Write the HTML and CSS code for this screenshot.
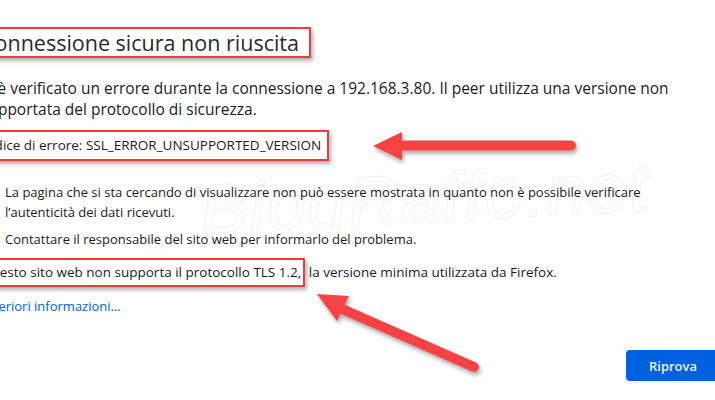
FILE: index.html
```html
<!DOCTYPE html>
<html lang="it">
<head>
<meta charset="utf-8">
<title>Connessione sicura non riuscita</title>
<link rel="stylesheet" href="styles.css">
</head>
<body>
<main class="page">
  <h1 class="title"><span class="mark mark-title">Connessione sicura non riuscita</span></h1>
  <p class="desc">Si è verificato un errore durante la connessione a 192.168.3.80. Il peer utilizza una versione non supportata del protocollo di sicurezza.</p>
  <p class="code"><span class="mark mark-code">Codice di errore: SSL_ERROR_UNSUPPORTED_VERSION</span></p>
  <ul class="list">
    <li>La pagina che si sta cercando di visualizzare non può essere mostrata in quanto non è possibile verificare l’autenticità dei dati ricevuti.</li>
    <li>Contattare il responsabile del sito web per informarlo del problema.</li>
  </ul>
  <p class="tls"><span class="mark mark-tls">Questo sito web non supporta il protocollo TLS 1.2,</span> la versione minima utilizzata da Firefox.</p>
  <p class="more"><a class="link" href="#">Ulteriori informazioni…</a></p>
  <div class="actions"><button class="btn">Riprova</button></div>
</main>
<div class="watermark">BlogRaffo.net</div>
<svg class="arrows" width="715" height="400" viewBox="0 0 715 400">
  <defs>
    <filter id="sh" x="-20%" y="-50%" width="140%" height="200%">
      <feDropShadow dx="1.5" dy="3" stdDeviation="2" flood-color="#000" flood-opacity="0.35"/>
    </filter>
  </defs>
  <g filter="url(#sh)" fill="#f54343" stroke="#f54343">
    <line x1="398" y1="145.5" x2="571" y2="145.5" stroke-width="10" stroke-linecap="round"/>
    <polygon points="373,146 402,132 402,160" stroke="none"/>
    <line x1="333" y1="305" x2="474" y2="367" stroke-width="10" stroke-linecap="round"/>
    <polygon points="317,294 349,296 337,321" stroke="none"/>
  </g>
</svg>
</body>
</html>
```
FILE: styles.css
```css
html, body {
  margin: 0;
  padding: 0;
  background: #ffffff;
}
body {
  width: 715px;
  height: 400px;
  overflow: hidden;
  position: relative;
  font-family: "Open Sans", "Noto Sans", sans-serif;
  color: #1c1b22;
}
.page {
  margin-left: -19px;
  padding-top: 27px;
}
.title {
  margin: 0;
  font-size: 21.5px;
  font-weight: 400;
  line-height: 27px;
  color: #2a2a2e;
}
.mark {
  display: inline-block;
  margin-left: -4px;
  padding-left: 2px;
  border: 2px solid #ef3b3b;
  box-shadow: 2px 3px 4px rgba(0, 0, 0, 0.3);
}
.mark-title {
  padding-right: 10px;
}
.desc {
  margin: 19.5px 0 0;
  width: 720px;
  font-size: 15.5px;
  line-height: 21px;
}
.code {
  margin: 10.5px 0 0;
  font-size: 13.5px;
  line-height: 27px;
}
.mark-code {
  margin-left: -7px;
  padding-right: 6px;
}
.list {
  list-style: none;
  margin: 21px 0 0;
  padding: 0 0 0 24px;
  width: 690px;
  font-size: 13px;
  line-height: 20px;
}
.list li + li {
  margin-top: 7px;
}
.tls {
  margin: 9px 0 0;
  font-size: 13.5px;
  line-height: 25px;
}
.mark-tls {
  padding-right: 2px;
}
.more {
  margin: 9px 0 0;
  font-size: 13px;
  line-height: 20px;
}
.link {
  color: #0061e0;
  text-decoration: none;
}
.actions {
  display: flex;
  justify-content: flex-end;
  margin: 34px -5px 0 0;
  width: 739px;
}
.btn {
  width: 94px;
  height: 31px;
  border: 0;
  border-radius: 4px;
  background: #0061e0;
  color: #eef3ff;
  font-family: "Open Sans", sans-serif;
  font-size: 13px;
  font-weight: 600;
}
.watermark {
  position: absolute;
  left: 200px;
  top: 158px;
  font-family: "Liberation Sans", sans-serif;
  font-style: italic;
  font-size: 70px;
  letter-spacing: 2px;
  color: transparent;
  -webkit-text-stroke: 1px rgba(0, 0, 0, 0.06);
  transform: rotate(-3deg);
  pointer-events: none;
}
.arrows {
  position: absolute;
  left: 0;
  top: 0;
  pointer-events: none;
}
```
